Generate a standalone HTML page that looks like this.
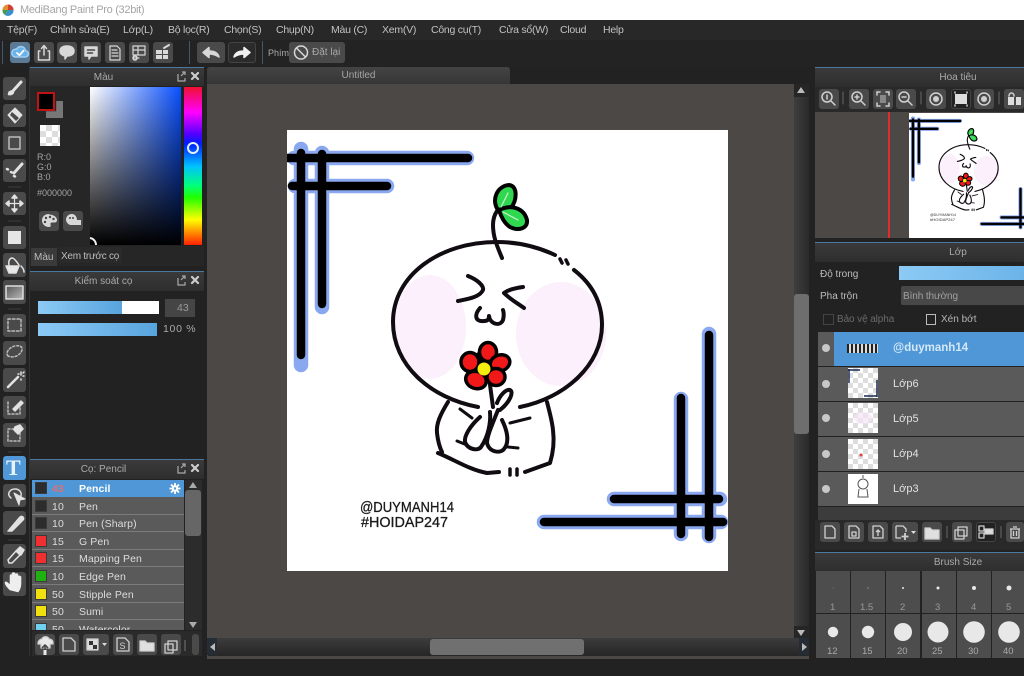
<!DOCTYPE html>
<html lang="vi"><head><meta charset="utf-8"><title>MediBang Paint Pro</title>
<style>
html,body{margin:0;padding:0;background:#222}
#app{position:relative;width:1024px;height:676px;overflow:hidden;background:#222;font-family:"Liberation Sans","Noto Sans CJK SC",sans-serif;font-size:10px;color:#bdbdbd}
.b{position:absolute}
.t{position:absolute;white-space:nowrap;line-height:14px}
.m{position:absolute;white-space:nowrap;line-height:14px;top:23px;font-size:10.5px;letter-spacing:-.25px;color:#c2c2c2}
.btn{position:absolute;background:#4a4a4a;border-radius:3px}
.hd{position:absolute;background:linear-gradient(#3a3a3a,#2e2e2e);border-top:1px solid #4a789e;color:#aaa;text-align:center;line-height:19px;box-sizing:border-box}
.hl{padding-right:27px}
.hr{padding-left:77px}
.row{position:absolute;left:0;width:152px;height:16px;background:#5a5a5a;border-bottom:1px solid #7c7c7c;color:#ddd;font-size:10.5px;letter-spacing:.1px}
.row i{position:absolute;left:3px;top:2px;width:12px;height:12px;background:#2c2c2c;border:1px solid #3a3a3a;box-sizing:border-box}
.row b{position:absolute;left:20px;top:2px;font-weight:normal;line-height:14px}
.row u{position:absolute;left:47px;top:2px;text-decoration:none;line-height:14px;white-space:nowrap}
.ly{position:absolute;left:818px;width:206px;height:34px;background:#5a5a5a;border-bottom:1px solid #222}
.th{position:absolute;left:848px;width:30px;height:30px;background-color:#fff;background-image:linear-gradient(45deg,#ddd 25%,transparent 25%,transparent 75%,#ddd 75%),linear-gradient(45deg,#ddd 25%,transparent 25%,transparent 75%,#ddd 75%);background-size:10px 10px;background-position:0 0,5px 5px}
.cell{position:absolute;background:#4d4d4d}
svg{position:absolute;left:0;top:0}
</style></head><body>
<div id="app">
<!-- title -->
<div class="b" style="left:0;top:0;width:1024px;height:20px;background:#fff"></div>
<span class="t" style="left:20px;top:3px;color:#a5a5a5;font-size:11px;letter-spacing:-.3px">MediBang Paint Pro (32bit)</span>
<!-- menu -->
<div class="b" style="left:0;top:20px;width:1024px;height:20px;background:#282828"></div>
<span class="m" style="left:7px">Tệp(F)</span>
<span class="m" style="left:50px">Chỉnh sửa(E)</span>
<span class="m" style="left:123px">Lớp(L)</span>
<span class="m" style="left:168px">Bộ lọc(R)</span>
<span class="m" style="left:224px">Chọn(S)</span>
<span class="m" style="left:276px">Chụp(N)</span>
<span class="m" style="left:331px">Màu (C)</span>
<span class="m" style="left:382px">Xem(V)</span>
<span class="m" style="left:431px">Công cụ(T)</span>
<span class="m" style="left:499px">Cửa sổ(W)</span>
<span class="m" style="left:560px">Cloud</span>
<span class="m" style="left:603px">Help</span>
<!-- toolbar -->
<div class="b" style="left:0;top:40px;width:1024px;height:26px;background:#232323"></div>
<div class="b" style="left:2px;top:41px;width:1px;height:23px;background:#3f5a70"></div>
<div class="btn" style="left:10px;top:42px;width:20px;height:21px;background:#5b7a96"></div>
<div class="btn" style="left:34px;top:42px;width:20px;height:21px"></div>
<div class="btn" style="left:57px;top:42px;width:20px;height:21px"></div>
<div class="btn" style="left:81px;top:42px;width:20px;height:21px"></div>
<div class="btn" style="left:105px;top:42px;width:20px;height:21px"></div>
<div class="btn" style="left:129px;top:42px;width:20px;height:21px"></div>
<div class="btn" style="left:153px;top:42px;width:20px;height:21px"></div>
<div class="b" style="left:189px;top:41px;width:1px;height:23px;background:#3f5a70"></div>
<div class="btn" style="left:197px;top:42px;width:28px;height:21px"></div>
<div class="btn" style="left:228px;top:42px;width:28px;height:21px;background:#2b2b2b;border:1px solid #444;box-sizing:border-box"></div>
<div class="b" style="left:262px;top:41px;width:1px;height:23px;background:#3f5a70"></div>
<span class="t" style="left:268px;top:46px;font-size:9px;color:#aaa">Phím</span>
<div class="btn" style="left:289px;top:42px;width:56px;height:21px"></div>
<span class="t" style="left:312px;top:46px;font-size:10px;color:#a8a8a8">Đặt lại</span>

<!-- left tools -->
<div class="btn" style="left:3px;top:77px;width:23px;height:23px"></div>
<div class="btn" style="left:3px;top:104px;width:23px;height:23px"></div>
<div class="btn" style="left:3px;top:131px;width:23px;height:24px"></div>
<div class="btn" style="left:3px;top:159px;width:23px;height:23px"></div>
<div class="btn" style="left:3px;top:192px;width:23px;height:23px"></div>
<div class="btn" style="left:3px;top:226px;width:23px;height:23px"></div>
<div class="btn" style="left:3px;top:253px;width:23px;height:24px"></div>
<div class="btn" style="left:3px;top:280px;width:23px;height:24px"></div>
<div class="btn" style="left:3px;top:314px;width:23px;height:23px"></div>
<div class="btn" style="left:3px;top:341px;width:23px;height:24px"></div>
<div class="btn" style="left:3px;top:368px;width:23px;height:24px"></div>
<div class="btn" style="left:3px;top:396px;width:23px;height:23px"></div>
<div class="btn" style="left:3px;top:423px;width:23px;height:24px"></div>
<div class="btn" style="left:3px;top:456px;width:23px;height:24px;background:#4f97d6"></div>
<div class="btn" style="left:3px;top:484px;width:23px;height:23px"></div>
<div class="btn" style="left:3px;top:511px;width:23px;height:24px"></div>
<div class="btn" style="left:3px;top:544px;width:23px;height:24px"></div>
<div class="btn" style="left:3px;top:572px;width:23px;height:24px"></div>
<span class="t" style="left:6px;top:457px;font:bold 22px/22px 'Liberation Serif',serif;color:#e8f2fa">T</span>

<!-- colour panel -->
<div class="b" style="left:29px;top:66px;width:1px;height:590px;background:#333"></div>
<div class="hd hl" style="left:30px;top:67px;width:174px;height:19px">Màu</div>
<div class="b" style="left:30px;top:86px;width:60px;height:160px;background:#262626"></div>
<div class="b" style="left:37px;top:92px;width:14px;height:15px;background:#000;border:2px solid #c01414"></div>
<div class="b" style="left:46px;top:101px;width:17px;height:17px;background:#777;clip-path:polygon(60% 0,100% 0,100% 100%,0 100%,0 60%,60% 60%)"></div>
<div class="b" style="left:40px;top:125px;width:20px;height:21px;background-color:#fff;background-image:linear-gradient(45deg,#ddd 25%,transparent 25%,transparent 75%,#ddd 75%),linear-gradient(45deg,#ddd 25%,transparent 25%,transparent 75%,#ddd 75%);background-size:12px 12px;background-position:0 0,6px 6px"></div>
<span class="t" style="left:37px;top:150px;font-size:9px;color:#a5a5a5">R:0</span>
<span class="t" style="left:37px;top:160px;font-size:9px;color:#a5a5a5">G:0</span>
<span class="t" style="left:37px;top:170px;font-size:9px;color:#a5a5a5">B:0</span>
<span class="t" style="left:37px;top:186px;font-size:9px;color:#a5a5a5">#000000</span>
<div class="btn" style="left:39px;top:211px;width:20px;height:20px"></div>
<div class="btn" style="left:63px;top:211px;width:20px;height:20px"></div>
<div class="b" style="left:90px;top:87px;width:91px;height:158px;background:linear-gradient(to bottom,rgba(0,0,0,0),#000),linear-gradient(to right,#fff,#0a50ff)"></div>
<div class="b" style="left:184px;top:87px;width:18px;height:158px;background:linear-gradient(to bottom,#f01030 0%,#ff00ff 16%,#5000ff 30%,#0020ff 36%,#00c0ff 50%,#00ff80 62%,#20ff00 70%,#ffff00 84%,#ff2000 100%)"></div>
<div class="b" style="left:30px;top:246px;width:174px;height:20px;background:#262626"></div>
<div class="b" style="left:31px;top:248px;width:26px;height:18px;background:#3a3a3a"></div>
<span class="t" style="left:34px;top:251px;font-size:10px">Màu</span>
<div class="b" style="left:58px;top:247px;width:64px;height:16px;background:#2a2a2a"></div>
<span class="t" style="left:61px;top:250px;font-size:10px;letter-spacing:-.25px">Xem trước cọ</span>

<!-- brush control -->
<div class="hd hl" style="left:30px;top:271px;width:174px;height:20px">Kiểm soát cọ</div>
<div class="b" style="left:38px;top:301px;width:121px;height:13px;background:#fff"></div>
<div class="b" style="left:38px;top:301px;width:84px;height:13px;background:linear-gradient(to right,#8ccaf5,#58a4de)"></div>
<div class="b" style="left:165px;top:299px;width:30px;height:18px;background:#454545"></div>
<span class="t" style="left:177px;top:301px;font-size:10.5px;color:#999">43</span>
<div class="b" style="left:38px;top:323px;width:119px;height:13px;background:linear-gradient(to right,#8ccaf5,#58a4de)"></div>
<span class="t" style="left:163px;top:322px;font-size:10.5px;letter-spacing:.7px;color:#aaa">100 %</span>

<!-- brush list -->
<div class="hd hl" style="left:30px;top:459px;width:174px;height:20px">Cọ: Pencil</div>
<div class="b" style="left:32px;top:480px;width:152px;height:150px;overflow:hidden;background:#5a5a5a">
<div class="row" style="top:0;background:#4f97d6;border-color:#4f97d6;color:#fff;font-weight:bold"><i></i><b style="color:#e07070;font-weight:bold">43</b><u>Pencil</u></div>
<div class="row" style="top:18px"><i></i><b>10</b><u>Pen</u></div>
<div class="row" style="top:35px"><i></i><b>10</b><u>Pen (Sharp)</u></div>
<div class="row" style="top:53px"><i style="background:#f03030"></i><b>15</b><u>G Pen</u></div>
<div class="row" style="top:70px"><i style="background:#f03030"></i><b>15</b><u>Mapping Pen</u></div>
<div class="row" style="top:88px"><i style="background:#20b010"></i><b>10</b><u>Edge Pen</u></div>
<div class="row" style="top:106px"><i style="background:#f0e010"></i><b>50</b><u>Stipple Pen</u></div>
<div class="row" style="top:123px"><i style="background:#f0e010"></i><b>50</b><u>Sumi</u></div>
<div class="row" style="top:141px"><i style="background:#70d0f0"></i><b>50</b><u>Watercolor</u></div>
</div>
<div class="b" style="left:185px;top:480px;width:17px;height:150px;background:#2c2c2c"></div>
<div class="b" style="left:185px;top:490px;width:16px;height:46px;background:#666;border-radius:3px"></div>
<div class="b" style="left:32px;top:631px;width:170px;height:25px;background:#2a2a2a"></div>
<div class="btn" style="left:35px;top:634px;width:20px;height:21px"></div>
<div class="btn" style="left:59px;top:634px;width:20px;height:21px"></div>
<div class="btn" style="left:83px;top:634px;width:26px;height:21px"></div>
<div class="btn" style="left:113px;top:634px;width:20px;height:21px"></div>
<div class="btn" style="left:137px;top:634px;width:20px;height:21px"></div>
<div class="btn" style="left:161px;top:634px;width:20px;height:21px"></div>
<div class="btn" style="left:192px;top:634px;width:7px;height:21px"></div>

<!-- doc -->
<div class="b" style="left:207px;top:67px;width:303px;height:17px;background:linear-gradient(#444,#363636);border-radius:3px 3px 0 0;text-align:center;line-height:17px;color:#a5a5a5;font-size:10px">Untitled</div>
<div class="b" style="left:207px;top:84px;width:605px;height:575px;background:#4b4846"></div>
<div class="b" style="left:287px;top:130px;width:441px;height:441px;background:#fff"></div>
<div class="b" style="left:794px;top:84px;width:15px;height:554px;background:linear-gradient(to right,#3e3e3e,#2a2a2a)"></div>
<div class="b" style="left:794px;top:294px;width:15px;height:140px;background:#6e6e6e;border-radius:3px"></div>
<div class="b" style="left:794px;top:84px;width:15px;height:13px;background:#262626"></div>
<div class="b" style="left:794px;top:626px;width:15px;height:13px;background:#262626"></div>
<div class="b" style="left:208px;top:638px;width:601px;height:18px;background:linear-gradient(#3c3c3c,#262626)"></div>
<div class="b" style="left:430px;top:639px;width:154px;height:16px;background:#707070;border-radius:3px"></div>
<div class="b" style="left:207px;top:638px;width:10px;height:17px;background:#262c34"></div>
<div class="b" style="left:799px;top:638px;width:10px;height:17px;background:#262c34"></div>
<div class="b" style="left:207px;top:659px;width:817px;height:17px;background:#222"></div>
<div class="b" style="left:809px;top:66px;width:6px;height:593px;background:#222"></div>

<!-- right: navigator -->
<div class="hd hr" style="left:815px;top:67px;width:209px;height:20px">Hoa tiêu</div>
<div class="b" style="left:815px;top:87px;width:209px;height:25px;background:#292929"></div>
<div class="btn" style="left:819px;top:89px;width:20px;height:20px"></div>
<div class="btn" style="left:849px;top:89px;width:20px;height:20px"></div>
<div class="btn" style="left:873px;top:89px;width:20px;height:20px"></div>
<div class="btn" style="left:896px;top:89px;width:20px;height:20px"></div>
<div class="btn" style="left:926px;top:89px;width:20px;height:20px"></div>
<div class="btn" style="left:951px;top:89px;width:20px;height:20px;background:#222;border:1px solid #444;box-sizing:border-box"></div>
<div class="btn" style="left:974px;top:89px;width:20px;height:20px"></div>
<div class="btn" style="left:1004px;top:89px;width:20px;height:20px"></div>
<div class="b" style="left:815px;top:112px;width:209px;height:126px;background:#4b4846"></div>
<div class="b" style="left:888px;top:112px;width:2px;height:126px;background:#e02c2c"></div>
<div class="b" style="left:909px;top:113px;width:115px;height:125px;background:#fff"></div>

<!-- layers -->
<div class="hd hr" style="left:815px;top:242px;width:209px;height:20px">Lớp</div>
<span class="t" style="left:820px;top:268px;font-size:10px">Độ trong</span>
<div class="b" style="left:899px;top:266px;width:125px;height:14px;background:linear-gradient(to right,#8ccaf5,#6cb4e8)"></div>
<span class="t" style="left:820px;top:290px;font-size:10px">Pha trộn</span>
<div class="b" style="left:901px;top:286px;width:123px;height:19px;background:#484848;border-radius:2px 0 0 2px"></div>
<span class="t" style="left:903px;top:290px;font-size:10px;letter-spacing:-.1px;color:#a0a0a0">Bình thường</span>
<div class="b" style="left:823px;top:314px;width:9px;height:9px;border:1px solid #444"></div>
<span class="t" style="left:837px;top:313px;font-size:10px;letter-spacing:-.1px;color:#6a6a6a">Bảo vệ alpha</span>
<div class="b" style="left:926px;top:314px;width:8px;height:9px;border:1px solid #bbb"></div>
<span class="t" style="left:941px;top:313px;font-size:10px;color:#b5b5b5">Xén bớt</span>

<div class="ly" style="top:332px"></div>
<div class="b" style="left:834px;top:332px;width:190px;height:34px;background:#4f97d6"></div>
<div class="ly" style="top:367px"></div>
<div class="ly" style="top:402px"></div>
<div class="ly" style="top:437px"></div>
<div class="ly" style="top:472px"></div>
<div class="b" style="left:818px;top:507px;width:206px;height:13px;background:#3c3c3c"></div>
<div class="b" style="left:847px;top:344px;width:31px;height:9px;background:repeating-linear-gradient(90deg,#222 0 2px,#ddd 2px 4px)"></div>
<div class="th" style="top:368px"></div>
<div class="th" style="top:403px"></div>
<div class="th" style="top:439px"></div>
<div class="th" style="top:474px;background:#fff"></div>
<span class="t" style="left:893px;top:341px;font-size:11.5px;font-weight:bold;color:#d4e8f8">@duymanh14</span>
<span class="t" style="left:893px;top:377px;font-size:11px;color:#e0e0e0">Lớp6</span>
<span class="t" style="left:893px;top:412px;font-size:11px;color:#e0e0e0">Lớp5</span>
<span class="t" style="left:893px;top:447px;font-size:11px;color:#e0e0e0">Lớp4</span>
<span class="t" style="left:893px;top:482px;font-size:11px;color:#e0e0e0">Lớp3</span>
<div class="b" style="left:815px;top:520px;width:209px;height:30px;background:#292929"></div>
<div class="btn" style="left:820px;top:522px;width:20px;height:20px"></div>
<div class="btn" style="left:844px;top:522px;width:20px;height:20px"></div>
<div class="btn" style="left:868px;top:522px;width:20px;height:20px"></div>
<div class="btn" style="left:892px;top:522px;width:26px;height:20px"></div>
<div class="btn" style="left:922px;top:522px;width:20px;height:20px"></div>
<div class="btn" style="left:952px;top:522px;width:20px;height:20px"></div>
<div class="btn" style="left:976px;top:522px;width:20px;height:20px;background:#222;border:1px solid #444;box-sizing:border-box"></div>
<div class="btn" style="left:1006px;top:522px;width:18px;height:20px"></div>

<!-- brush size -->
<div class="hd hr" style="left:815px;top:552px;width:209px;height:19px">Brush Size</div>
<div class="cell" style="left:816px;top:571px;width:34px;height:42px"></div>
<div class="cell" style="left:851px;top:571px;width:34px;height:42px"></div>
<div class="cell" style="left:886px;top:571px;width:34px;height:42px"></div>
<div class="cell" style="left:922px;top:571px;width:34px;height:42px"></div>
<div class="cell" style="left:957px;top:571px;width:34px;height:42px"></div>
<div class="cell" style="left:992px;top:571px;width:32px;height:42px"></div>
<div class="cell" style="left:816px;top:614px;width:34px;height:44px"></div>
<div class="cell" style="left:851px;top:614px;width:34px;height:44px"></div>
<div class="cell" style="left:886px;top:614px;width:34px;height:44px"></div>
<div class="cell" style="left:922px;top:614px;width:34px;height:44px"></div>
<div class="cell" style="left:957px;top:614px;width:34px;height:44px"></div>
<div class="cell" style="left:992px;top:614px;width:32px;height:44px"></div>
<span class="t" style="left:830px;top:601px;font-size:9.5px;color:#999">1</span>
<span class="t" style="left:860px;top:601px;font-size:9.5px;color:#999">1.5</span>
<span class="t" style="left:900px;top:601px;font-size:9.5px;color:#999">2</span>
<span class="t" style="left:935px;top:601px;font-size:9.5px;color:#999">3</span>
<span class="t" style="left:971px;top:601px;font-size:9.5px;color:#999">4</span>
<span class="t" style="left:1006px;top:601px;font-size:9.5px;color:#999">5</span>
<span class="t" style="left:827px;top:645px;font-size:9.5px;color:#aaa">12</span>
<span class="t" style="left:862px;top:645px;font-size:9.5px;color:#aaa">15</span>
<span class="t" style="left:897px;top:645px;font-size:9.5px;color:#aaa">20</span>
<span class="t" style="left:932px;top:645px;font-size:9.5px;color:#aaa">25</span>
<span class="t" style="left:968px;top:645px;font-size:9.5px;color:#aaa">30</span>
<span class="t" style="left:1003px;top:645px;font-size:9.5px;color:#aaa">40</span>

<!-- vector overlay -->
<svg width="1024" height="676" viewBox="0 0 1024 676" xmlns="http://www.w3.org/2000/svg" font-family="Liberation Sans, sans-serif">
<defs>
<linearGradient id="g1" x1="0" x2="1" y1="0" y2="1"><stop offset="0" stop-color="#555"/><stop offset="1" stop-color="#bbb"/></linearGradient>
<clipPath id="cv"><rect x="287" y="130" width="441" height="441"/></clipPath>
<g id="art" fill="none" stroke-linecap="round" stroke-linejoin="round" clip-path="url(#cv)">
<ellipse cx="430" cy="327" rx="36" ry="52" fill="#fbf0fb"/>
<ellipse cx="561" cy="334" rx="45" ry="52" fill="#fbf0fb"/>
<g stroke="#8aa8f0" stroke-width="14.5">
<path d="M294 158H467M295 186H387M301 149V365M322 153V307"/>
<path d="M709 334V536M681 399V534M614 499H720M544 522H721"/>
</g>
<g stroke="#000" stroke-width="8.500">
<path d="M287 158H468M292 186H387M301 153V355M322 154V304"/>
<path d="M709 335V537M681 398V534M614 499H719M544 522H723"/>
</g>
<g stroke="#110b12" stroke-width="4">
<path d="M478 407C430 398 393 365 393 322C393 275 440 242 497 242C520 242 540 248 555 255"/>
<path d="M574 270C592 284 602 302 602 325C602 365 565 398 520 407"/>
<path d="M560 259L562 263M566 260L568 264" stroke-width="3.500"/>
<path d="M502 258C498 248 493 238 493 225C493 219 495 214 497 211"/>
<path d="M468 276C478 280 484 286 483 290C480 297 468 299 458 301"/>
<path d="M523 287C515 288 508 290 504 293C510 299 517 303 524 308"/>
<path d="M480 308C474 315 475 322 484 321C488 321 489 319 489 316C490 324 500 327 503 320C504 316 504 313 503 310"/>
<path d="M448 402C440 415 436 424 437 433C438 442 440 448 442 452M438 453C455 460 470 470 487 473L499 472"/>
<path d="M510 469V475M517 469V475" stroke-width="3.500"/>
<path d="M525 472L550 463C554 450 554 438 553 430C552 420 549 410 547 402"/>
<path d="M490 385L493 407"/>
<path d="M480 417C470 426 464 436 465 442C468 450 478 451 481 447C488 437 491 423 490 412"/>
<path d="M498 410C492 425 487 436 487 443C489 452 500 454 504 449C510 442 507 430 502 420"/>
<path d="M497 403C500 395 506 389 510 390C514 392 510 402 500 410"/>
<path d="M460 409L472 418M457 441L467 445M510 423L530 418M508 447L518 448" stroke-width="3"/>
</g>
<circle cx="484" cy="367" r="16" fill="#000"/>
<g stroke="#000" stroke-width="3.500" fill="#f01818">
<ellipse cx="488" cy="352" rx="8.500" ry="9.500"/>
<ellipse cx="500" cy="363" rx="10" ry="8" transform="rotate(-20 500 363)"/>
<ellipse cx="496" cy="377" rx="9" ry="8.500"/>
<ellipse cx="476" cy="380" rx="10.500" ry="8.500" transform="rotate(20 476 380)"/>
<ellipse cx="470" cy="362" rx="9" ry="9.500"/>
</g>
<circle cx="484" cy="369" r="6.500" fill="#f5ec10"/>
<g stroke="#000" stroke-width="4" fill="#30d850">
<path d="M498 210C491 200 497 186 509 185C518 186 517 200 511 208C506 210 502 211 498 210Z"/>
<path d="M499 210C511 204 524 208 527 220C528 229 518 231 510 227C505 224 501 217 499 210Z"/>
</g>
<path d="M501 207L508 193M503 212L518 220" stroke="#c8f5d0" stroke-width="1.200"/>
</g>
</defs>

<!-- logo -->
<circle cx="8" cy="10" r="5.500" fill="#e09030"/><path d="M8 10L8 4.500A5.500 5.500 0 0 1 13.500 10Z" fill="#d04030"/><path d="M8 10L13.500 10A5.500 5.500 0 0 1 5 15Z" fill="#3a8fd0"/><path d="M8 10L5 15A5.500 5.500 0 0 1 2.500 10Z" fill="#40a050"/>

<!-- artwork -->
<use href="#art"/>
<text x="360" y="512" font-size="15" fill="#1a1a1a" stroke="#1a1a1a" stroke-width=".3" textLength="94" lengthAdjust="spacingAndGlyphs">@DUYMANH14</text>
<text x="361" y="527" font-size="15" fill="#1a1a1a" stroke="#1a1a1a" stroke-width=".3" textLength="87" lengthAdjust="spacingAndGlyphs">#HOIDAP247</text>
<!-- preview -->
<svg x="909" y="113" width="115" height="125" viewBox="287 130 406.4 441.7"><use href="#art"/></svg>

<!-- toolbar icons -->
<g fill="none" stroke="#d8d8d8" stroke-width="1.500" stroke-linejoin="round" stroke-linecap="round">
<path d="M15 57h10a3.200 3.200 0 0 0 .5-6.400a4.800 4.800 0 0 0-9-1.400a3.800 3.800 0 0 0-1.500 7.800Z" fill="#6ab2ea" stroke="#9fd0f2"/>
<path d="M17 53l2.500 2.200 4-4.500" stroke="#fff" stroke-width="1.800"/>
<path d="M40 51h-1.500v9h11v-9H48M44 55V46M41.500 48.500L44 45.500l2.500 3"/>
<path d="M67 46c4.500 0 7 2 7 5s-2.500 5-7 5l-2 3v-3c-3-.5-5-2.500-5-5 0-3 2.500-5 7-5Z" fill="#d8d8d8"/>
<path d="M85 47h12v9h-6l-2 3v-3h-4Z" fill="#d8d8d8"/><path d="M87.500 50h7M87.500 53h5" stroke="#444"/>
<path d="M110 46h7l3 3v11h-10ZM112 50h5M112 53h6M112 56h6" stroke-width="1.200"/>
<path d="M133 46h12v9h-12ZM133 50h12M138 46v9M133 58h6" stroke-width="1.200"/><circle cx="135" cy="58" r="2"/>
<path d="M156 50h6v4h-6ZM163 50h5v4h-5ZM156 55h6v4h-6ZM163 55h5v4h-5Z" fill="#d8d8d8" stroke="none"/><path d="M164 48l5-3" stroke-width="2"/>
<path d="M219 57c-1-4-4-6-10-6v-3.500l-6 5 6 5v-3.500c4 0 7 1 10 3Z" fill="#d8d8d8"/>
<path d="M234 57c1-4 4-6 10-6v-3.500l6 5-6 5v-3.500c-4 0-7 1-10 3Z" fill="#f0f0f0" stroke="#f0f0f0"/>
<circle cx="301" cy="52.500" r="6.500"/><path d="M296.500 48l9 9"/>
</g>

<!-- panel header icons -->
<g fill="none" stroke="#aaa" stroke-width="1.200">
<path d="M178 74v7h7v-3M181 76l4-4M182 72h3v3"/>
<path d="M178 278v7h7v-3M181 280l4-4M182 276h3v3M178 466v7h7v-3M181 468l4-4M182 464h3v3"/>
</g>
<g stroke="#ccc" stroke-width="2.200" stroke-linecap="round">
<path d="M192 73l6 6M198 73l-6 6M192 277l6 6M198 277l-6 6M192 465l6 6M198 465l-6 6"/>
</g>

<!-- hue ring and corner marker -->
<circle cx="193" cy="148" r="5" fill="none" stroke="#e8f0ff" stroke-width="2"/>
<path d="M90 238a7 7 0 0 1 6 7" fill="none" stroke="#eee" stroke-width="2"/>

<!-- color panel buttons -->
<g fill="#d8d8d8">
<path d="M49 214c-5 0-7 3.500-7 6.500 0 3.500 3 6.500 7 6.500 2 0 2-1.500 1.500-2.500-.5-1.200.5-2 2-2h2c1.200 0 2.500-.5 2.500-2.500 0-3-3.500-5.500-8-5.500Z"/>
<path d="M72 214c-4 0-6 3-6 5.500 0 3 2.500 5.500 5 5.500h10v-5h-4c0-3-2-6-5-6Z"/>
</g>
<g fill="#444"><circle cx="46" cy="218" r="1.200"/><circle cx="50" cy="217" r="1.200"/><circle cx="53.500" cy="219" r="1.200"/><circle cx="45" cy="222" r="1.200"/><circle cx="70" cy="218" r="1"/><circle cx="73" cy="218" r="1"/></g>

<!-- tool icons -->
<g fill="none" stroke="#e2e2e2" stroke-width="1.500" stroke-linecap="round" stroke-linejoin="round">
<path d="M21 82L12 92" stroke-width="3"/><path d="M12 91c-2 0-3.500 1-3.500 3.500 2.500.5 4 0 5-2Z" fill="#e2e2e2"/>
<path d="M15 108l7 7-7 8-7-8Z" fill="#e2e2e2" stroke-width="1"/><path d="M12 112l7 6-3 3-6-6Z" fill="#4a4a4a" stroke="none"/>
<rect x="9" y="137" width="11" height="12" stroke="#bbb"/>
<path d="M22 164l-8 9" stroke-width="3"/><path d="M7 169l1 .5M11 172l1 .5M14 176l1 .5" stroke-width="2.500"/>
<path d="M14.500 197v13M8 203.500h13" stroke-width="1.200"/><path d="M14.500 195l-2.500 3h5ZM14.500 212l-2.500-3h5ZM6 203.500l3-2.500v5ZM23 203.500l-3-2.500v5Z" fill="#e2e2e2"/>
<rect x="8" y="231" width="13" height="13" fill="#e6e6e6" stroke="none"/>
<path d="M6 266h13l-3 7h-7Z" fill="#e8e8e8"/><path d="M9 265c-1-4 1-7 3-7s5 4 7 7M21 266c2 2 3 4 3 6"/>
<rect x="6" y="286" width="17" height="13" fill="url(#g1)" stroke="#ddd"/>
<rect x="8" y="319" width="13" height="12" stroke-dasharray="2.500 2" stroke="#bbb"/>
<path d="M8 356c-3-4 2-9 7-10 5-1 8 1 7 4-1 4-7 9-14 6Z" stroke-dasharray="2 2" stroke="#bbb"/>
<path d="M8 387L18 377" stroke-width="2.500"/><path d="M21 372v3M18 374h1M23 376h1M21 379v1M24 372l-1 1"/>
<path d="M8 402v12h12v-6" stroke-dasharray="2 2" stroke="#bbb"/><path d="M13 409l8-8 2 2-8 8Z" fill="#e2e2e2"/>
<rect x="8" y="429" width="12" height="12" stroke-dasharray="2 2" stroke="#bbb"/><path d="M15 427l5-2 3 4-5 5-4-4Z" fill="#e2e2e2"/>
<path d="M11 498c-5-4-1-9 4-9 4 0 7 3 6 7" stroke="#ddd"/><path d="M14 493l11 6-5 1-1 5Z" fill="#e2e2e2" stroke-width="1"/>
<path d="M9 530l11-13c2-2 5 1 3 3L12 531Z" fill="#e2e2e2"/><path d="M8 531l3 0"/>
<path d="M9 563l-1-3 8-9 4 4-8 8Z"/><path d="M16 551l4-4 4 3-3 5Z" fill="#e2e2e2"/>
<path d="M10 590c-3-3-5-6-5-7 0-2 2-1 3 0l2 2v-9c0-2 2-2 2 0v-2c0-2 3-2 3 0v1c0-2 3-2 3 0v2c0-2 3-1 3 0v7c0 4-2 7-3 8Z" fill="#eee" stroke="#eee" stroke-width=".6"/>
</g>
<g stroke="#3e3e3e" stroke-width="1"><path d="M8 187h13M8 221h13M8 309h13M8 452h13M8 540h13"/></g>

<!-- brush list extras -->
<circle cx="175" cy="488.500" r="3.200" fill="#fff"/>
<g stroke="#fff" stroke-width="1.800"><path d="M175 483v11M169.500 488.500h11M171 484.500l8 8M179 484.500l-8 8"/></g>
<circle cx="175" cy="488.500" r="1.200" fill="#4f97d6"/>
<g fill="#aaa"><path d="M193 482l4 6h-8ZM193 628l4-6h-8Z"/></g>
<g fill="#bbb">
<path d="M801 87l4 6h-8ZM801 636l4-6h-8ZM210 647l5-4v8ZM807 647l-5-4v8Z"/>
</g>

<!-- brush bottom buttons -->
<g fill="none" stroke="#d0d0d0" stroke-width="1.300" stroke-linejoin="round">
<path d="M41 648v-4h-3c0-4 3-5 4-5 1-3 6-3 7 0 2 0 4 1 4 4v1h-3v4Z" fill="#e8e8e8"/><path d="M45 654v-8M42 648l3-3 3 3" stroke="#4a4a4a" stroke-width="1.600"/><path d="M45 650v5" stroke="#e8e8e8" stroke-width="3"/>
<path d="M63 638h8l4 4v9H63Z"/>
<path d="M87 639h11v11H87Z" fill="#ddd"/><path d="M89 641h4v4h-4ZM93 645h4v4h-4Z" fill="#333" stroke="none"/><path d="M102 643h5l-2.500 3Z" fill="#ddd" stroke="none"/>
<path d="M117 638h8l4 4v9h-12Z"/><text x="119.500" y="649" font-size="9" fill="#d0d0d0" stroke="none">S</text>
<path d="M140 641h5l2 2h7v8h-14Z" fill="#e0e0e0"/>
<path d="M168 641h9v9h-9ZM165 644h8v9h-8Z"/>
<path d="M185 640v11" stroke="#666"/>
</g>

<!-- navigator icons -->
<g fill="none" stroke="#d0d0d0" stroke-width="1.500" stroke-linecap="round">
<circle cx="827" cy="97" r="5"/><path d="M831 101l4 4M827 95v4"/>
<circle cx="857" cy="97" r="5"/><path d="M861 101l4 4M855 97h4M857 95v4"/>
<path d="M877 95v-3h3M889 95v-3h-3M877 103v3h3M889 103v3h-3"/><rect x="880" y="95" width="6" height="8" fill="#888" stroke="none"/>
<circle cx="904" cy="97" r="5"/><path d="M908 101l4 4M902 97h4"/>
<circle cx="936" cy="99" r="6"/><circle cx="936" cy="99" r="3" fill="#d0d0d0" stroke="none"/>
<rect x="955" y="94" width="12" height="10" fill="#ddd" stroke="none"/><path d="M955 93v-1M967 93v-1M955 105v1M967 105v1"/>
<circle cx="984" cy="99" r="6"/><circle cx="984" cy="99" r="3" fill="#d0d0d0" stroke="none"/>
<path d="M1008 97v8h6v-8ZM1016 97h5v8h-5Z" fill="#ddd" stroke="none"/><path d="M1009 96c0-4 5-4 5 0"/>
<path d="M843 92v12M921 92v12M999 92v12" stroke="#666" stroke-width="1"/>
</g>
<text x="930" y="216" font-size="4" fill="#333" textLength="26" lengthAdjust="spacingAndGlyphs">@DUYMANH14</text>
<text x="930" y="221" font-size="4" fill="#333" textLength="25" lengthAdjust="spacingAndGlyphs">#HOIDAP247</text>

<!-- layer eyes -->
<g fill="#c8c8c8"><circle cx="826" cy="348" r="4"/><circle cx="826" cy="384" r="4"/><circle cx="826" cy="418" r="4"/><circle cx="826" cy="454" r="4"/><circle cx="826" cy="489" r="4"/></g>
<!-- layer thumbnails -->
<g fill="none">
<path d="M848 370h12M849 369v14" stroke="#1a2850" stroke-width="1.500"/>
<path d="M877 380v17M864 396h13" stroke="#1a2850" stroke-width="1.500"/>
<circle cx="861" cy="455" r="1.500" fill="#e04040"/>
<circle cx="863" cy="484" r="5" stroke="#555"/><path d="M863 478v-3M859 489l-1 8h10l-1-8" stroke="#555"/>
<ellipse cx="863" cy="418" rx="9" ry="6" fill="#f5e4f5" opacity=".7"/>
</g>
<!-- layer toolbar icons -->
<g fill="none" stroke="#d0d0d0" stroke-width="1.300" stroke-linejoin="round">
<path d="M825 526h7l3 3v9h-10Z"/>
<path d="M849 526h7l3 3v9h-10ZM852 532h4v4h-4Z"/>
<path d="M873 526h7l3 3v9h-10ZM878 536v-6M876 532l2-2 2 2"/>
<path d="M896 526h7l3 3v3M896 526v12h5"/><path d="M905 533v7M901.500 536.500h7" stroke-width="1.800"/><path d="M911 531h5l-2.500 3Z" fill="#ddd" stroke="none"/>
<path d="M925 528h5l2 2h7v9h-14Z" fill="#e0e0e0"/>
<path d="M958 527h9v9h-9ZM955 530h9v9h-9Z"/>
<path d="M979 526h5v5h-5ZM979 533h5v5h-5Z"/><path d="M985 529h8v5h-8Z" fill="#ddd"/>
<path d="M1010 529h10M1011 529v9h8v-9M1013 527h4M1013.500 531v5M1016.500 531v5"/>
<path d="M947 526v12M1001 526v12" stroke="#666" stroke-width="1"/>
</g>

<!-- brush size dots -->
<g fill="#e8e8e8">
<circle cx="833" cy="588" r=".4" opacity=".6"/><circle cx="868" cy="588" r=".6" opacity=".7"/><circle cx="903" cy="588" r="1"/><circle cx="938" cy="588" r="1.500"/><circle cx="974" cy="588" r="2"/><circle cx="1009" cy="588" r="2.500"/>
<circle cx="833" cy="632" r="5.200"/><circle cx="868" cy="632" r="6.200"/><circle cx="903" cy="632" r="9"/><circle cx="938" cy="632" r="10.500"/><circle cx="974" cy="632" r="10.800"/><circle cx="1009" cy="632" r="10.800"/>
</g>
</svg>
</div>
</body></html>
